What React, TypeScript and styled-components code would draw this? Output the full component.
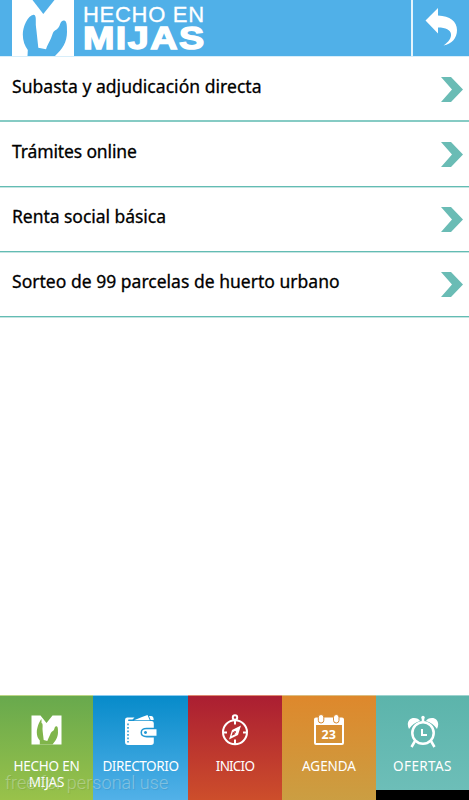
import React from "react";
import styled, { createGlobalStyle } from "styled-components";

const GlobalStyle = createGlobalStyle`
  * { box-sizing: border-box; }
  body { margin: 0; background: #fff; font-family: "Noto Sans", sans-serif; overflow: hidden; }
`;

const Screen = styled.div`
  position: relative;
  display: flex;
  flex-direction: column;
  width: 469px;
  height: 800px;
  overflow: hidden;
`;

const Header = styled.header`
  display: flex;
  height: 57px;
  flex: none;
  background: #50b0e8;
  border-bottom: 1px solid #d8eefa;
  padding-left: 12px;
`;

const Brand = styled.div`
  display: flex;
  flex-direction: column;
  align-items: flex-start;
  flex: 1;
  padding: 4px 0 0 9px;
  color: #fff;
  white-space: nowrap;
`;

const BrandTop = styled.span`
  font: 22px/21px "Liberation Sans", sans-serif;
  letter-spacing: 0.7px;
  -webkit-text-stroke: 0.3px #fff;
`;

const BrandName = styled.strong`
  font: 900 32px/27px "Liberation Sans", sans-serif;
  letter-spacing: 1.2px;
  -webkit-text-stroke: 1.4px #fff;
  transform: scaleX(1.18);
  transform-origin: 0 0;
`;

const BackButton = styled.button`
  width: 58px;
  height: 56px;
  padding: 0;
  border: 0;
  border-left: 2px solid #e4f4fc;
  background: transparent;
  svg { display: block; }
`;

const List = styled.ul`
  flex: 1;
  list-style: none;
  margin: 0;
  padding: 0;
`;

const Row = styled.li<{ $soft?: boolean }>`
  display: flex;
  justify-content: space-between;
  height: 65px;
  padding: 17px 6px 0 12px;
  border-bottom: ${(p) => (p.$soft ? "2px solid #86cbc4" : "1px solid #63bcb3")};
  box-shadow: ${(p) => (p.$soft ? "none" : "0 1px 0 #c5e5e2")};
  svg { margin-top: 3px; }
`;

const RowLabel = styled.span<{ $spacing: number }>`
  font-size: 17.5px;
  line-height: 25px;
  color: #000;
  letter-spacing: ${(p) => p.$spacing}px;
  -webkit-text-stroke: 0.3px #000;
  white-space: nowrap;
`;

const TabBar = styled.nav`
  display: grid;
  grid-template-columns: 93px 95px 94px 94px 93px;
  height: 105px;
  background: #000;
`;

const Tab = styled.a<{ $from: string; $to: string; $height?: number }>`
  display: flex;
  flex-direction: column;
  align-items: center;
  height: ${(p) => p.$height ?? 105}px;
  padding-top: 17px;
  border-top: 1px solid #ffffff55;
  background: linear-gradient(${(p) => p.$from}, ${(p) => p.$to});
  svg { display: block; flex: none; }
`;

const TabLabel = styled.span<{ $spacing: number }>`
  margin-top: 9px;
  color: #fff;
  font-size: 13.5px;
  line-height: 16px;
  letter-spacing: ${(p) => p.$spacing}px;
  text-align: center;
  white-space: pre-line;
`;

const Watermark = styled.div`
  position: absolute;
  left: 5px;
  top: 771px;
  font: 300 18px/24px Roboto, sans-serif;
  letter-spacing: 0.05px;
  color: rgba(225, 235, 225, 0.4);
  text-shadow: 1px 1px 1px rgba(0, 0, 0, 0.08);
  white-space: nowrap;
  pointer-events: none;
`;

const HeaderLogo = () => (
  <svg width="62" height="56" viewBox="12 0 62 56">
    <path fill="#fff" d="M12 0h62v56H12z" />
    <path fill="#50b0e8" d="M32.500 0h22L43.300 14Z" />
    <path
      fill="#50b0e8"
      d="M33.500 14.700c2-.3 2.500 3 2.300 7-.3 4 .8 8 1 12l1.500 14 7.700 1.500c1-4 3.500-7 5-11l2-5.500c1.500-3 5-3 6.500-7 1-3 2-5.500 4.500-5.200 3 .5 3 5 3 11.500 0 10-4.500 17-12 24H27.500l.3-6c-3-4-5-9-5-15.500 0-8 5-19 10.700-19.800Z"
    />
  </svg>
);

const BackArrow = () => (
  <svg width="56" height="56" viewBox="413 0 56 56">
    <path
      fill="#fff"
      d="M425.500 20.500 438 8v7.500c12 .5 19 6 19 14.500 0 8-5 14-13.500 15.500 5-3.500 8-7.500 7.500-11.500-.6-4-5-6.500-13-6.500v6Z"
    />
  </svg>
);

const Chevron = () => (
  <svg width="22" height="26" viewBox="0 0 22 26">
    <path fill="#6abcb5" d="M0 0h10l12 12.500L10 25H0l11-12.500Z" />
  </svg>
);

const MijasIcon = () => (
  <svg width="31" height="36" viewBox="31 713 31 36">
    <path fill="#fff" d="M31.500 715.500h9l6 7.500 6-7.500h9v29h-30Z" />
    <path fill="#80b54b" d="M41.500 723c1.300 0 1.300 3 1 6 .2 3 .8 7 1.200 11l3.600 1c1-3 2.500-5 3.500-8 1.200-2 3-2 3.500-4 .5-2 1-3 2.200-2.800 1.700.3 1.500 4 1.500 6.300 0 5-3 9-5.500 12H39.800v-4c-2-2-3-5-3-8 0-5 2.500-11 4.700-13.500Z" />
  </svg>
);

const WalletIcon = () => (
  <svg width="34" height="36" viewBox="125 713 34 36">
    <path fill="#fff" d="M128 717.500h7.500l-2 2h-4q-1 .8 0 1.500h23q2.300 0 2.300 2.300v4.500h-7q-6.300 0-6.300 4.800t6.300 4.800h7v4.800q0 2.800-2.800 2.800H129q-3 0-3-3v-22q0-2.500 2-2.500Z" />
    <path fill="#fff" d="m135 720.200 8-3.200 5.500-2 2.300 5.200ZM150 716h2q2.700 0 2.700 4h-3Z" />
    <path fill="#fff" fillRule="evenodd" d="M147 729.300h10.500v6.400H147q-4 0-4-3.200t4-3.200Zm-.5 1.700a1.500 1.500 0 1 0 .01 0Z" />
    <path d="M129 723.500v19" stroke="#259ad4" strokeWidth="1.500" strokeDasharray="1.800 1.700" />
  </svg>
);

const CompassIcon = () => (
  <svg width="30" height="36" viewBox="219.500 713 30 36">
    <g fill="none" stroke="#fff" strokeWidth="2">
      <circle cx="234.500" cy="732.300" r="12" />
      <circle cx="234.500" cy="717.500" r="2.200" />
      <path d="M234.500 720v4.500m0 15v5m-12-12h4m16 0h4" />
    </g>
    <path fill="#fff" fillRule="evenodd" d="m240.500 725.500-3 9.500-9 4.500 3-9.500Zm-8 6-1.500 4.500 4-2Z" />
    <circle cx="234.500" cy="732" r="1" fill="#bc2930" />
  </svg>
);

const DateText = styled.text`
  font: 700 12.5px "Noto Sans", sans-serif;
  fill: #fff;
`;

const CalendarIcon = () => (
  <svg width="30" height="36" viewBox="314 713 30 36">
    <path fill="#fff" fillRule="evenodd" d="M316 717.500h26q2 0 2 2V743q0 2-2 2h-26q-2 0-2-2v-23.500q0-2 2-2Zm0 7.500v18h26v-18Z" />
    <g fill="#fff" stroke="#d98b32" strokeWidth="1">
      <rect x="318.300" y="714.500" width="5.500" height="8.500" rx="2.700" />
      <rect x="333.500" y="714.500" width="5.500" height="8.500" rx="2.700" />
    </g>
    <DateText x="321.500" y="739">23</DateText>
  </svg>
);

const AlarmIcon = () => (
  <svg width="32" height="36" viewBox="407 713 32 36">
    <g fill="none" stroke="#fff">
      <circle cx="423" cy="733" r="10.700" strokeWidth="2.500" />
      <path strokeWidth="2.500" d="m415 741-3.500 6m19.500-6 3.500 6M423 718v5" />
      <path strokeWidth="2" d="M422 729v6h5" />
    </g>
    <circle cx="423" cy="717.500" r="1.700" fill="#fff" />
    <path fill="#fff" d="M409 729c-3-6 0-11 5-11 3 0 5 1 6 3q-7 2-11 8Zm28 0c3-6 0-11-5-11-3 0-5 1-6 3q7 2 11 8Z" />
  </svg>
);

const rows = [
  { label: "Subasta y adjudicación directa", spacing: 0.04, soft: true },
  { label: "Trámites online", spacing: -0.13 },
  { label: "Renta social básica", spacing: -0.04 },
  { label: "Sorteo de 99 parcelas de huerto urbano", spacing: 0.02 },
];

const tabs = [
  { label: "HECHO EN\nMIJAS", from: "#68a94d", to: "#99c24a", icon: <MijasIcon />, spacing: -0.25 },
  { label: "DIRECTORIO", from: "#078bca", to: "#52b1e8", icon: <WalletIcon />, spacing: -0.4 },
  { label: "INICIO", from: "#ab1e32", to: "#cd4e2b", icon: <CompassIcon />, spacing: -0.8 },
  { label: "AGENDA", from: "#de882c", to: "#cb9e42", icon: <CalendarIcon />, spacing: -0.05 },
  { label: "OFERTAS", from: "#5cb4ab", to: "#6dbeb8", icon: <AlarmIcon />, spacing: 0.4, height: 95 },
];

export default function App() {
  return (
    <Screen>
      <GlobalStyle />
      <Header>
        <HeaderLogo />
        <Brand>
          <BrandTop>HECHO EN</BrandTop>
          <BrandName>MIJAS</BrandName>
        </Brand>
        <BackButton aria-label="Volver"><BackArrow /></BackButton>
      </Header>
      <List>
        {rows.map((row) => (
          <Row key={row.label} $soft={row.soft}>
            <RowLabel $spacing={row.spacing}>{row.label}</RowLabel>
            <Chevron />
          </Row>
        ))}
      </List>
      <TabBar>
        {tabs.map((tab) => (
          <Tab key={tab.label} $from={tab.from} $to={tab.to} $height={tab.height}>
            {tab.icon}
            <TabLabel $spacing={tab.spacing}>{tab.label}</TabLabel>
          </Tab>
        ))}
      </TabBar>
      <Watermark>free for personal use</Watermark>
    </Screen>
  );
}
